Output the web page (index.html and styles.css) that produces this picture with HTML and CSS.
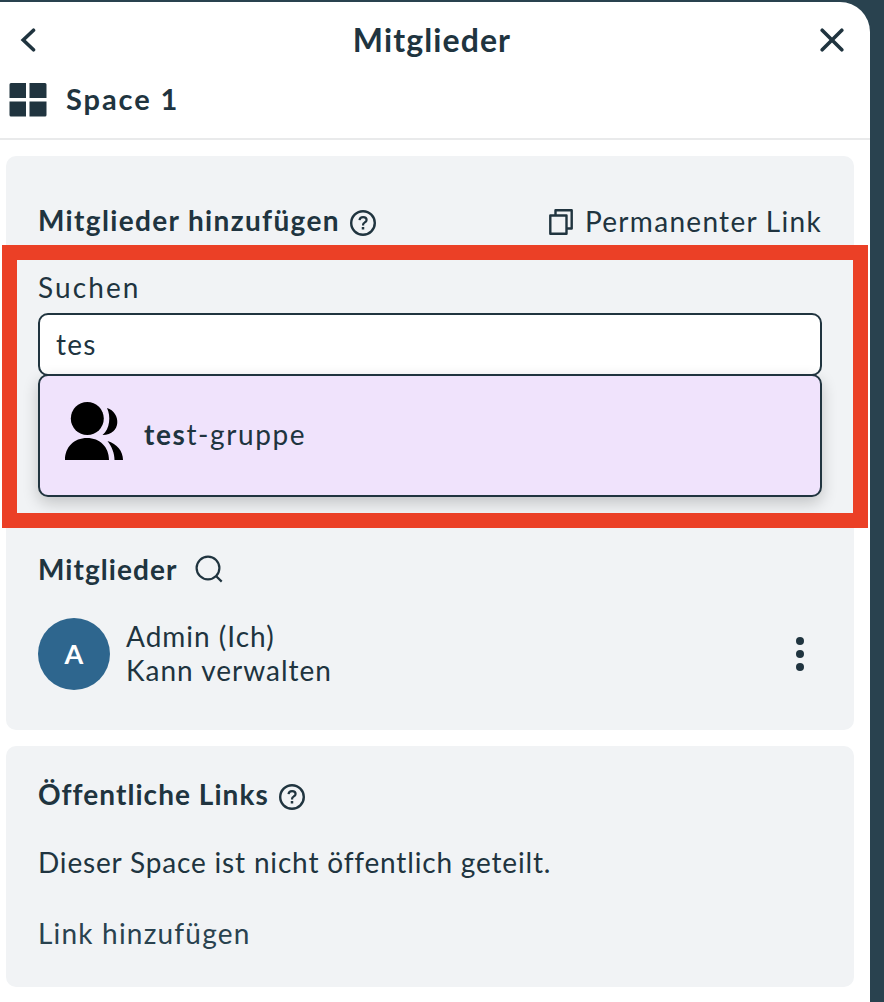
FILE: index.html
```html
<!DOCTYPE html>
<html lang="de">
<head>
<meta charset="utf-8">
<title>Mitglieder</title>
<link rel="stylesheet" href="styles.css">
</head>
<body>
<aside class="panel">
  <header class="panel-header">
    <div class="title-row">
      <button class="icon-button" aria-label="Zurück"><svg width="16" height="24" viewBox="0 0 16 24"><path d="M13.5 2.2 3.2 12l10.3 9.8" fill="none" stroke="currentColor" stroke-width="3.6" stroke-linecap="round"/></svg></button>
      <h1 class="title">Mitglieder</h1>
      <button class="icon-button" aria-label="Schließen"><svg width="24" height="24" viewBox="0 0 24 24"><path d="m2.200 2.200 19.600 19.600m0-19.600-19.600 19.600" fill="none" stroke="currentColor" stroke-width="3.6" stroke-linecap="round"/></svg></button>
    </div>
    <div class="space-row">
      <svg class="space-icon" width="38" height="34" viewBox="0 0 38 34" fill="currentColor"><path d="M2 0h15v15H.5V1.500Q.5 0 2 0ZM20.500 0H36q1.500 0 1.500 1.500V15h-17ZM.5 18.500h16.500v15H2Q.5 33.500.5 32ZM20.500 18.500h17V32q0 1.500-1.500 1.500H20.500Z"/></svg>
      <span class="space-name">Space 1</span>
    </div>
  </header>

  <section class="card members">
    <div class="card-head">
      <h2 class="heading add-heading">Mitglieder hinzufügen</h2>
      <svg class="help" width="26" height="26" viewBox="0 0 26 26" fill="none" stroke="currentColor"><circle cx="13" cy="13" r="11.800" stroke-width="2.400"/><path d="M9.500 10.200q.4-3 3.600-3 3.500 0 3.500 2.800 0 1.600-2 2.600-1.500.8-1.500 2.200v.7" stroke-width="2.200"/><path d="M13 17v2.500" stroke-width="2.500"/></svg>
      <a class="permalink">
        <svg width="24" height="26" viewBox="0 0 24 26" fill="none" stroke="currentColor" stroke-width="2.400" stroke-linejoin="round"><path d="M1.300 6.500h16.200v18.200H1.300ZM6.500 6.500V1.300h16.200v18.200h-5.200"/></svg>
        <span class="permalink-text">Permanenter Link</span>
      </a>
    </div>

    <label class="search-label" for="q">Suchen</label>
    <input class="search-input" id="q" value="tes">
    <div class="option">
      <svg width="58" height="58" viewBox="0 0 58 58"><circle cx="22.300" cy="16.500" r="16.500"/><path d="M0 58C0 45 9 36 22 36s22 9 22 22ZM42 6c14 4 15 27-4.500 27C45 27 46 14 42 6ZM42.500 39C52 42 58 49 58 58h-8.500c0-7-2.500-13-7-19Z"/></svg>
      <span class="option-text"><b class="match">tes</b>t-gruppe</span>
    </div>

    <div class="members-head">
      <h2 class="heading">Mitglieder</h2>
      <svg width="28" height="28" viewBox="0 0 28 28" fill="none" stroke="currentColor" stroke-width="2.200"><circle cx="13" cy="13" r="11.400"/><path d="m21 21 5.700 5.600"/></svg>
    </div>
    <div class="member">
      <span class="avatar">A</span>
      <div class="member-info"><div class="member-name">Admin (Ich)</div><div class="member-role">Kann verwalten</div></div>
      <svg class="more" width="8" height="34" viewBox="0 0 8 34" fill="currentColor"><circle cx="4" cy="4" r="4"/><circle cx="4" cy="17" r="4"/><circle cx="4" cy="30" r="4"/></svg>
    </div>
    <div class="highlight"></div>
  </section>

  <section class="card links">
    <div class="card-head">
      <h2 class="heading links-heading">Öffentliche Links</h2>
      <svg class="help" width="26" height="26" viewBox="0 0 26 26" fill="none" stroke="currentColor"><circle cx="13" cy="13" r="11.800" stroke-width="2.400"/><path d="M9.500 10.200q.4-3 3.600-3 3.500 0 3.500 2.800 0 1.600-2 2.600-1.500.8-1.500 2.200v.7" stroke-width="2.200"/><path d="M13 17v2.500" stroke-width="2.500"/></svg>
    </div>
    <p class="links-empty">Dieser Space ist nicht öffentlich geteilt.</p>
    <a class="add-link">Link hinzufügen</a>
  </section>
</aside>
</body>
</html>
```
FILE: styles.css
```css
* { box-sizing: border-box; }
body {
  margin: 0;
  padding-top: 2px;
  height: 1002px;
  overflow: hidden;
  background: #29424f;
  color: #20343f;
  font: 28px/34px Lato, sans-serif;
}
h1, h2, p { margin: 0; }
svg { display: block; flex: none; }
.panel {
  width: 870px;
  height: 1000px;
  background: #fff;
  border-top-right-radius: 30px;
}
.panel-header {
  height: 138px;
  padding-top: 17px;
  border-bottom: 2px solid #e9eaeb;
}
.title-row {
  display: flex;
  align-items: center;
  justify-content: space-between;
  height: 42px;
  padding: 0 26px 0 20px;
}
.icon-button {
  display: flex;
  width: 24px;
  padding: 0;
  border: 0;
  background: none;
  color: inherit;
}
.title { font-size: 32px; line-height: 42px; letter-spacing: 1.1px; font-weight: 700; }
.space-row {
  display: flex;
  align-items: center;
  gap: 19px;
  padding: 21px 9px 0;
}
.space-icon { margin: 1px 0 -1px; }
.space-name { font-size: 29px; font-weight: 700; letter-spacing: 1.9px; }
.card {
  width: 848px;
  margin: 16px 0 0 6px;
  padding: 0 32px;
  border-radius: 10px;
  background: #f1f3f5;
}
.members { position: relative; height: 574px; padding-top: 47px; }
.card-head { display: flex; align-items: center; height: 34px; }
.heading { font-size: 28px; line-height: 34px; font-weight: 700; letter-spacing: 1.05px; }
.add-heading { letter-spacing: 1.35px; }
.help { margin: 5px 0 0 10px; }
.permalink { display: flex; align-items: center; gap: 12px; margin-left: auto; }
.permalink svg { margin-top: 3px; }
.permalink-text { margin-top: 2px; letter-spacing: 1.3px; }
.search-label { display: block; margin-top: 33px; letter-spacing: 2.1px; }
.search-input {
  display: block;
  width: 784px;
  height: 63px;
  margin-top: 9px;
  padding: 0 16px 2px;
  border: 2px solid #20343f;
  border-radius: 10px;
  outline: 0;
  background: #fff;
  color: inherit;
  font: inherit;
  letter-spacing: 1.2px;
}
.option {
  display: flex;
  align-items: center;
  gap: 21px;
  height: 123px;
  margin-top: -2px;
  padding: 0 25px 3px;
  border: 2px solid #20343f;
  border-radius: 10px;
  background: #f0e3fc;
  box-shadow: 0 6px 16px rgba(0, 0, 0, .2);
}
.option svg { margin-top: -7px; }
.option-text { letter-spacing: 1.6px; }
.match { font-weight: 700; }
.members-head { display: flex; align-items: center; gap: 18px; margin-top: 55px; }
.member { display: flex; align-items: center; height: 72px; margin-top: 32px; padding-right: 18px; }
.avatar {
  display: flex;
  align-items: center;
  justify-content: center;
  width: 72px;
  height: 72px;
  border-radius: 50%;
  background: #2e668e;
  color: #fff;
  font-size: 27px;
  font-weight: 700;
}
.member-info { margin: -2px 0 0 16px; }
.member-name, .member-role { letter-spacing: 1px; }
.more { margin-left: auto; }
.highlight {
  position: absolute;
  top: 89px;
  left: -4px;
  width: 866px;
  height: 283px;
  border: 15px solid #eb4026;
}
.links { height: 241px; padding-top: 31px; }
.links-empty { margin-top: 34px; letter-spacing: .83px; }
.add-link { display: block; margin-top: 37px; color: #29424f; letter-spacing: 1.2px; }
```
